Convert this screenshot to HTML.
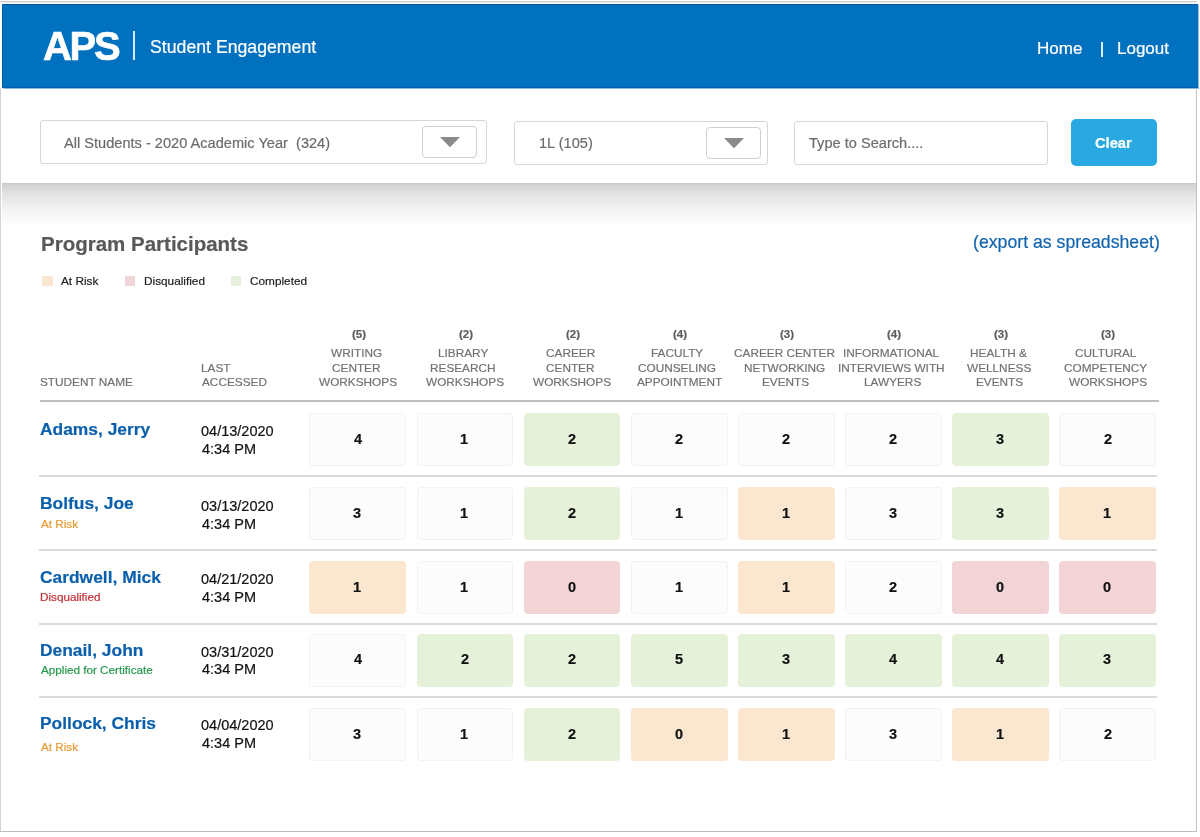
<!DOCTYPE html>
<html><head><meta charset="utf-8"><title>APS Student Engagement</title>
<style>
html,body{margin:0;padding:0;background:#fff;width:1200px;height:837px;overflow:hidden}
body{position:relative;font-family:"Liberation Sans",sans-serif}
.t{position:absolute;white-space:pre;will-change:transform;-webkit-text-stroke:0.2px currentColor}
.r{position:absolute}
</style></head><body>
<div class="r" style="left:0.00px;top:1.00px;width:1197.00px;height:1.00px;background:#cfcfcf"></div>
<div class="r" style="left:0.00px;top:2.00px;width:1197.00px;height:1.00px;background:#e4ebf2"></div>
<div class="r" style="left:0.00px;top:88.00px;width:1.00px;height:744.00px;background:#d4d4d4"></div>
<div class="r" style="left:1196.00px;top:88.00px;width:1.00px;height:744.00px;background:#c4c4c4"></div>
<div class="r" style="left:0.00px;top:831.00px;width:1197.00px;height:1.00px;background:#bdbdbd"></div>
<div class="r" style="left:2.00px;top:4.00px;width:1195.50px;height:84.00px;background:#0071bf;box-shadow:inset 0 -1px 0 #005fa8, inset 1px 0 0 #0060a8, inset 0 1px 0 #0058a0, 0 0 1px 0.5px #8dbbe0"></div>
<div class="t" style="left:42.50px;top:26px;font-size:40px;line-height:40px;color:#fff;font-weight:bold;letter-spacing:-2.3px;-webkit-text-stroke:0.6px #fff;">APS</div>
<div class="r" style="left:133.20px;top:31.40px;width:2.00px;height:28.60px;background:#d4ecff"></div>
<div class="t" style="left:150.00px;top:39px;font-size:17.7px;line-height:17.7px;color:#fff;font-weight:normal;letter-spacing:0px;">Student Engagement</div>
<div class="t" style="left:1036.70px;top:40px;font-size:17px;line-height:17px;color:#fff;font-weight:normal;letter-spacing:0px;">Home</div>
<div class="r" style="left:1101.00px;top:41.80px;width:1.60px;height:15.40px;background:#d8efff"></div>
<div class="t" style="left:1117.00px;top:40px;font-size:17px;line-height:17px;color:#fff;font-weight:normal;letter-spacing:0px;">Logout</div>
<div class="r" style="left:40.30px;top:120.00px;width:446.90px;height:44.00px;border:1.3px solid #d6d6d6;border-radius:3px;box-sizing:border-box;background:#fff"></div>
<div class="r" style="left:422.20px;top:125.70px;width:55.30px;height:32.50px;border:1.3px solid #cfcfcf;border-radius:4px;box-sizing:border-box;background:#fff"></div>
<svg class="r" style="left:440px;top:137px" width="20" height="11" viewBox="0 0 20 11"><path d="M0 0H20L10 10.3Z" fill="#8a8a8a"/></svg>
<div class="t" style="left:64.40px;top:136px;font-size:14.6px;line-height:14.6px;color:#6c6c6c;font-weight:normal;letter-spacing:0px;">All Students - 2020 Academic Year  (324)</div>
<div class="r" style="left:514.25px;top:120.50px;width:254.00px;height:44.00px;border:1.3px solid #d6d6d6;border-radius:3px;box-sizing:border-box;background:#fff"></div>
<div class="r" style="left:705.50px;top:126.75px;width:55.00px;height:32.50px;border:1.3px solid #cfcfcf;border-radius:4px;box-sizing:border-box;background:#fff"></div>
<svg class="r" style="left:724px;top:137.5px" width="20" height="11" viewBox="0 0 20 11"><path d="M0 0H20L10 10.3Z" fill="#8a8a8a"/></svg>
<div class="t" style="left:538.50px;top:136px;font-size:14.6px;line-height:14.6px;color:#6c6c6c;font-weight:normal;letter-spacing:0px;">1L (105)</div>
<div class="r" style="left:793.75px;top:120.70px;width:254.65px;height:44.30px;border:1.3px solid #d6d6d6;border-radius:3px;box-sizing:border-box;background:#fff"></div>
<div class="t" style="left:809.00px;top:136px;font-size:14.6px;line-height:14.6px;color:#6c6c6c;font-weight:normal;letter-spacing:0px;">Type to Search....</div>
<div class="r" style="left:1070.90px;top:119.00px;width:86.40px;height:46.70px;background:#2aa8e1;border-radius:5px"></div>
<div class="t" style="left:1094.80px;top:136px;font-size:14.7px;line-height:14.7px;color:#fff;font-weight:bold;letter-spacing:0px;">Clear</div>
<div class="r" style="left:2.00px;top:183.00px;width:1193.50px;height:43.00px;background:linear-gradient(#c9c9c9 0px,#d6d6d6 3px,#e4e4e4 12px,#f3f3f3 26px,#fff 43px)"></div>
<div class="t" style="left:41.00px;top:234px;font-size:20.5px;line-height:20.5px;color:#595959;font-weight:bold;letter-spacing:0px;">Program Participants</div>
<div class="t" style="left:972.80px;top:234px;font-size:17.7px;line-height:17.7px;color:#1164ae;font-weight:normal;letter-spacing:0px;">(export as spreadsheet)</div>
<div class="r" style="left:42.00px;top:276.00px;width:10.50px;height:10.00px;background:#fbe6d1"></div>
<div class="t" style="left:61.25px;top:276px;font-size:11.8px;line-height:11.8px;color:#222;font-weight:normal;letter-spacing:0px;">At Risk</div>
<div class="r" style="left:125.00px;top:276.00px;width:10.00px;height:10.00px;background:#f1d6d9"></div>
<div class="t" style="left:144.00px;top:276px;font-size:11.8px;line-height:11.8px;color:#222;font-weight:normal;letter-spacing:0px;">Disqualified</div>
<div class="r" style="left:231.00px;top:276.00px;width:10.00px;height:10.00px;background:#e6f0da"></div>
<div class="t" style="left:250.20px;top:276px;font-size:11.8px;line-height:11.8px;color:#222;font-weight:normal;letter-spacing:0px;">Completed</div>
<div class="t" style="left:40.00px;top:377px;font-size:11.8px;line-height:11.8px;color:#727272;font-weight:normal;letter-spacing:0px;">STUDENT NAME</div>
<div class="t" style="left:200.70px;top:363px;font-size:11.8px;line-height:11.8px;color:#727272;font-weight:normal;letter-spacing:0px;">LAST</div>
<div class="t" style="left:201.70px;top:377px;font-size:11.8px;line-height:11.8px;color:#727272;font-weight:normal;letter-spacing:0px;">ACCESSED</div>
<div class="t" style="left:351.70px;top:329px;font-size:11.5px;line-height:11.5px;color:#5e5e5e;font-weight:bold;letter-spacing:0px;">(5)</div>
<div class="t" style="left:331.10px;top:348px;font-size:11.8px;line-height:11.8px;color:#727272;font-weight:normal;letter-spacing:0px;">WRITING</div>
<div class="t" style="left:331.60px;top:363px;font-size:11.8px;line-height:11.8px;color:#727272;font-weight:normal;letter-spacing:0px;">CENTER</div>
<div class="t" style="left:318.80px;top:377px;font-size:11.8px;line-height:11.8px;color:#727272;font-weight:normal;letter-spacing:0px;">WORKSHOPS</div>
<div class="t" style="left:458.81px;top:329px;font-size:11.5px;line-height:11.5px;color:#5e5e5e;font-weight:bold;letter-spacing:0px;">(2)</div>
<div class="t" style="left:437.71px;top:348px;font-size:11.8px;line-height:11.8px;color:#727272;font-weight:normal;letter-spacing:0px;">LIBRARY</div>
<div class="t" style="left:430.21px;top:363px;font-size:11.8px;line-height:11.8px;color:#727272;font-weight:normal;letter-spacing:0px;">RESEARCH</div>
<div class="t" style="left:425.91px;top:377px;font-size:11.8px;line-height:11.8px;color:#727272;font-weight:normal;letter-spacing:0px;">WORKSHOPS</div>
<div class="t" style="left:565.92px;top:329px;font-size:11.5px;line-height:11.5px;color:#5e5e5e;font-weight:bold;letter-spacing:0px;">(2)</div>
<div class="t" style="left:545.82px;top:348px;font-size:11.8px;line-height:11.8px;color:#727272;font-weight:normal;letter-spacing:0px;">CAREER</div>
<div class="t" style="left:545.82px;top:363px;font-size:11.8px;line-height:11.8px;color:#727272;font-weight:normal;letter-spacing:0px;">CENTER</div>
<div class="t" style="left:533.02px;top:377px;font-size:11.8px;line-height:11.8px;color:#727272;font-weight:normal;letter-spacing:0px;">WORKSHOPS</div>
<div class="t" style="left:673.03px;top:329px;font-size:11.5px;line-height:11.5px;color:#5e5e5e;font-weight:bold;letter-spacing:0px;">(4)</div>
<div class="t" style="left:650.93px;top:348px;font-size:11.8px;line-height:11.8px;color:#727272;font-weight:normal;letter-spacing:0px;">FACULTY</div>
<div class="t" style="left:638.43px;top:363px;font-size:11.8px;line-height:11.8px;color:#727272;font-weight:normal;letter-spacing:0px;">COUNSELING</div>
<div class="t" style="left:636.63px;top:377px;font-size:11.8px;line-height:11.8px;color:#727272;font-weight:normal;letter-spacing:0px;">APPOINTMENT</div>
<div class="t" style="left:780.14px;top:329px;font-size:11.5px;line-height:11.5px;color:#5e5e5e;font-weight:bold;letter-spacing:0px;">(3)</div>
<div class="t" style="left:734.04px;top:348px;font-size:11.8px;line-height:11.8px;color:#727272;font-weight:normal;letter-spacing:0px;">CAREER CENTER</div>
<div class="t" style="left:744.04px;top:363px;font-size:11.8px;line-height:11.8px;color:#727272;font-weight:normal;letter-spacing:0px;">NETWORKING</div>
<div class="t" style="left:762.24px;top:377px;font-size:11.8px;line-height:11.8px;color:#727272;font-weight:normal;letter-spacing:0px;">EVENTS</div>
<div class="t" style="left:887.25px;top:329px;font-size:11.5px;line-height:11.5px;color:#5e5e5e;font-weight:bold;letter-spacing:0px;">(4)</div>
<div class="t" style="left:843.15px;top:348px;font-size:11.8px;line-height:11.8px;color:#727272;font-weight:normal;letter-spacing:0px;">INFORMATIONAL</div>
<div class="t" style="left:838.15px;top:363px;font-size:11.8px;line-height:11.8px;color:#727272;font-weight:normal;letter-spacing:0px;">INTERVIEWS WITH</div>
<div class="t" style="left:864.35px;top:377px;font-size:11.8px;line-height:11.8px;color:#727272;font-weight:normal;letter-spacing:0px;">LAWYERS</div>
<div class="t" style="left:994.36px;top:329px;font-size:11.5px;line-height:11.5px;color:#5e5e5e;font-weight:bold;letter-spacing:0px;">(3)</div>
<div class="t" style="left:969.76px;top:348px;font-size:11.8px;line-height:11.8px;color:#727272;font-weight:normal;letter-spacing:0px;">HEALTH &amp;</div>
<div class="t" style="left:966.76px;top:363px;font-size:11.8px;line-height:11.8px;color:#727272;font-weight:normal;letter-spacing:0px;">WELLNESS</div>
<div class="t" style="left:976.46px;top:377px;font-size:11.8px;line-height:11.8px;color:#727272;font-weight:normal;letter-spacing:0px;">EVENTS</div>
<div class="t" style="left:1101.47px;top:329px;font-size:11.5px;line-height:11.5px;color:#5e5e5e;font-weight:bold;letter-spacing:0px;">(3)</div>
<div class="t" style="left:1074.87px;top:348px;font-size:11.8px;line-height:11.8px;color:#727272;font-weight:normal;letter-spacing:0px;">CULTURAL</div>
<div class="t" style="left:1063.87px;top:363px;font-size:11.8px;line-height:11.8px;color:#727272;font-weight:normal;letter-spacing:0px;">COMPETENCY</div>
<div class="t" style="left:1068.57px;top:377px;font-size:11.8px;line-height:11.8px;color:#727272;font-weight:normal;letter-spacing:0px;">WORKSHOPS</div>
<div class="r" style="left:40.00px;top:400.00px;width:1118.75px;height:2.00px;background:#bfbfbf"></div>
<div class="t" style="left:40.20px;top:421px;font-size:17.4px;line-height:17.4px;color:#0b5fab;font-weight:bold;letter-spacing:0px;">Adams, Jerry</div>
<div class="t" style="left:200.60px;top:424px;font-size:14.5px;line-height:14.5px;color:#111;font-weight:normal;letter-spacing:0px;">04/13/2020</div>
<div class="t" style="left:201.50px;top:442px;font-size:14.5px;line-height:14.5px;color:#111;font-weight:normal;letter-spacing:0px;">4:34 PM</div>
<div class="r" style="left:309.40px;top:413.00px;width:96.80px;height:53.00px;background:#fcfcfc;box-shadow:inset 0 0 0 1px #f3f3f3;border-radius:4px"></div>
<div class="t" style="left:353.80px;top:432px;font-size:14.5px;line-height:14.5px;color:#111;font-weight:bold;letter-spacing:0px;">4</div>
<div class="r" style="left:416.51px;top:413.00px;width:96.80px;height:53.00px;background:#fcfcfc;box-shadow:inset 0 0 0 1px #f3f3f3;border-radius:4px"></div>
<div class="t" style="left:460.41px;top:432px;font-size:14.5px;line-height:14.5px;color:#111;font-weight:bold;letter-spacing:0px;">1</div>
<div class="r" style="left:523.62px;top:413.00px;width:96.80px;height:53.00px;background:#e6f1d9;border-radius:4px"></div>
<div class="t" style="left:568.02px;top:432px;font-size:14.5px;line-height:14.5px;color:#111;font-weight:bold;letter-spacing:0px;">2</div>
<div class="r" style="left:630.73px;top:413.00px;width:96.80px;height:53.00px;background:#fcfcfc;box-shadow:inset 0 0 0 1px #f3f3f3;border-radius:4px"></div>
<div class="t" style="left:675.13px;top:432px;font-size:14.5px;line-height:14.5px;color:#111;font-weight:bold;letter-spacing:0px;">2</div>
<div class="r" style="left:737.84px;top:413.00px;width:96.80px;height:53.00px;background:#fcfcfc;box-shadow:inset 0 0 0 1px #f3f3f3;border-radius:4px"></div>
<div class="t" style="left:782.24px;top:432px;font-size:14.5px;line-height:14.5px;color:#111;font-weight:bold;letter-spacing:0px;">2</div>
<div class="r" style="left:844.95px;top:413.00px;width:96.80px;height:53.00px;background:#fcfcfc;box-shadow:inset 0 0 0 1px #f3f3f3;border-radius:4px"></div>
<div class="t" style="left:889.35px;top:432px;font-size:14.5px;line-height:14.5px;color:#111;font-weight:bold;letter-spacing:0px;">2</div>
<div class="r" style="left:952.06px;top:413.00px;width:96.80px;height:53.00px;background:#e6f1d9;border-radius:4px"></div>
<div class="t" style="left:995.96px;top:432px;font-size:14.5px;line-height:14.5px;color:#111;font-weight:bold;letter-spacing:0px;">3</div>
<div class="r" style="left:1059.17px;top:413.00px;width:96.80px;height:53.00px;background:#fcfcfc;box-shadow:inset 0 0 0 1px #f3f3f3;border-radius:4px"></div>
<div class="t" style="left:1103.57px;top:432px;font-size:14.5px;line-height:14.5px;color:#111;font-weight:bold;letter-spacing:0px;">2</div>
<div class="t" style="left:40.20px;top:495px;font-size:17.4px;line-height:17.4px;color:#0b5fab;font-weight:bold;letter-spacing:0px;">Bolfus, Joe</div>
<div class="t" style="left:40.50px;top:518px;font-size:11.7px;line-height:11.7px;color:#e69b34;font-weight:normal;letter-spacing:0px;">At Risk</div>
<div class="t" style="left:200.60px;top:499px;font-size:14.5px;line-height:14.5px;color:#111;font-weight:normal;letter-spacing:0px;">03/13/2020</div>
<div class="t" style="left:201.50px;top:517px;font-size:14.5px;line-height:14.5px;color:#111;font-weight:normal;letter-spacing:0px;">4:34 PM</div>
<div class="r" style="left:309.40px;top:487.00px;width:96.80px;height:53.00px;background:#fcfcfc;box-shadow:inset 0 0 0 1px #f3f3f3;border-radius:4px"></div>
<div class="t" style="left:353.30px;top:506px;font-size:14.5px;line-height:14.5px;color:#111;font-weight:bold;letter-spacing:0px;">3</div>
<div class="r" style="left:416.51px;top:487.00px;width:96.80px;height:53.00px;background:#fcfcfc;box-shadow:inset 0 0 0 1px #f3f3f3;border-radius:4px"></div>
<div class="t" style="left:460.41px;top:506px;font-size:14.5px;line-height:14.5px;color:#111;font-weight:bold;letter-spacing:0px;">1</div>
<div class="r" style="left:523.62px;top:487.00px;width:96.80px;height:53.00px;background:#e6f1d9;border-radius:4px"></div>
<div class="t" style="left:568.02px;top:506px;font-size:14.5px;line-height:14.5px;color:#111;font-weight:bold;letter-spacing:0px;">2</div>
<div class="r" style="left:630.73px;top:487.00px;width:96.80px;height:53.00px;background:#fcfcfc;box-shadow:inset 0 0 0 1px #f3f3f3;border-radius:4px"></div>
<div class="t" style="left:674.63px;top:506px;font-size:14.5px;line-height:14.5px;color:#111;font-weight:bold;letter-spacing:0px;">1</div>
<div class="r" style="left:737.84px;top:487.00px;width:96.80px;height:53.00px;background:#fbe6d0;border-radius:4px"></div>
<div class="t" style="left:781.74px;top:506px;font-size:14.5px;line-height:14.5px;color:#111;font-weight:bold;letter-spacing:0px;">1</div>
<div class="r" style="left:844.95px;top:487.00px;width:96.80px;height:53.00px;background:#fcfcfc;box-shadow:inset 0 0 0 1px #f3f3f3;border-radius:4px"></div>
<div class="t" style="left:888.85px;top:506px;font-size:14.5px;line-height:14.5px;color:#111;font-weight:bold;letter-spacing:0px;">3</div>
<div class="r" style="left:952.06px;top:487.00px;width:96.80px;height:53.00px;background:#e6f1d9;border-radius:4px"></div>
<div class="t" style="left:995.96px;top:506px;font-size:14.5px;line-height:14.5px;color:#111;font-weight:bold;letter-spacing:0px;">3</div>
<div class="r" style="left:1059.17px;top:487.00px;width:96.80px;height:53.00px;background:#fbe6d0;border-radius:4px"></div>
<div class="t" style="left:1103.07px;top:506px;font-size:14.5px;line-height:14.5px;color:#111;font-weight:bold;letter-spacing:0px;">1</div>
<div class="t" style="left:40.20px;top:569px;font-size:17.4px;line-height:17.4px;color:#0b5fab;font-weight:bold;letter-spacing:0px;">Cardwell, Mick</div>
<div class="t" style="left:39.50px;top:591px;font-size:11.7px;line-height:11.7px;color:#bf2f36;font-weight:normal;letter-spacing:0px;">Disqualified</div>
<div class="t" style="left:200.60px;top:572px;font-size:14.5px;line-height:14.5px;color:#111;font-weight:normal;letter-spacing:0px;">04/21/2020</div>
<div class="t" style="left:201.50px;top:590px;font-size:14.5px;line-height:14.5px;color:#111;font-weight:normal;letter-spacing:0px;">4:34 PM</div>
<div class="r" style="left:309.40px;top:560.50px;width:96.80px;height:53.00px;background:#fbe6d0;border-radius:4px"></div>
<div class="t" style="left:353.30px;top:580px;font-size:14.5px;line-height:14.5px;color:#111;font-weight:bold;letter-spacing:0px;">1</div>
<div class="r" style="left:416.51px;top:560.50px;width:96.80px;height:53.00px;background:#fcfcfc;box-shadow:inset 0 0 0 1px #f3f3f3;border-radius:4px"></div>
<div class="t" style="left:460.41px;top:580px;font-size:14.5px;line-height:14.5px;color:#111;font-weight:bold;letter-spacing:0px;">1</div>
<div class="r" style="left:523.62px;top:560.50px;width:96.80px;height:53.00px;background:#f2d4d7;border-radius:4px"></div>
<div class="t" style="left:567.52px;top:580px;font-size:14.5px;line-height:14.5px;color:#111;font-weight:bold;letter-spacing:0px;">0</div>
<div class="r" style="left:630.73px;top:560.50px;width:96.80px;height:53.00px;background:#fcfcfc;box-shadow:inset 0 0 0 1px #f3f3f3;border-radius:4px"></div>
<div class="t" style="left:674.63px;top:580px;font-size:14.5px;line-height:14.5px;color:#111;font-weight:bold;letter-spacing:0px;">1</div>
<div class="r" style="left:737.84px;top:560.50px;width:96.80px;height:53.00px;background:#fbe6d0;border-radius:4px"></div>
<div class="t" style="left:781.74px;top:580px;font-size:14.5px;line-height:14.5px;color:#111;font-weight:bold;letter-spacing:0px;">1</div>
<div class="r" style="left:844.95px;top:560.50px;width:96.80px;height:53.00px;background:#fcfcfc;box-shadow:inset 0 0 0 1px #f3f3f3;border-radius:4px"></div>
<div class="t" style="left:889.35px;top:580px;font-size:14.5px;line-height:14.5px;color:#111;font-weight:bold;letter-spacing:0px;">2</div>
<div class="r" style="left:952.06px;top:560.50px;width:96.80px;height:53.00px;background:#f2d4d7;border-radius:4px"></div>
<div class="t" style="left:995.96px;top:580px;font-size:14.5px;line-height:14.5px;color:#111;font-weight:bold;letter-spacing:0px;">0</div>
<div class="r" style="left:1059.17px;top:560.50px;width:96.80px;height:53.00px;background:#f2d4d7;border-radius:4px"></div>
<div class="t" style="left:1103.07px;top:580px;font-size:14.5px;line-height:14.5px;color:#111;font-weight:bold;letter-spacing:0px;">0</div>
<div class="t" style="left:40.20px;top:642px;font-size:17.4px;line-height:17.4px;color:#0b5fab;font-weight:bold;letter-spacing:0px;">Denail, John</div>
<div class="t" style="left:40.50px;top:664px;font-size:11.7px;line-height:11.7px;color:#23984a;font-weight:normal;letter-spacing:0px;">Applied for Certificate</div>
<div class="t" style="left:200.60px;top:645px;font-size:14.5px;line-height:14.5px;color:#111;font-weight:normal;letter-spacing:0px;">03/31/2020</div>
<div class="t" style="left:201.50px;top:662px;font-size:14.5px;line-height:14.5px;color:#111;font-weight:normal;letter-spacing:0px;">4:34 PM</div>
<div class="r" style="left:309.40px;top:633.50px;width:96.80px;height:53.00px;background:#fcfcfc;box-shadow:inset 0 0 0 1px #f3f3f3;border-radius:4px"></div>
<div class="t" style="left:353.80px;top:652px;font-size:14.5px;line-height:14.5px;color:#111;font-weight:bold;letter-spacing:0px;">4</div>
<div class="r" style="left:416.51px;top:633.50px;width:96.80px;height:53.00px;background:#e6f1d9;border-radius:4px"></div>
<div class="t" style="left:460.91px;top:652px;font-size:14.5px;line-height:14.5px;color:#111;font-weight:bold;letter-spacing:0px;">2</div>
<div class="r" style="left:523.62px;top:633.50px;width:96.80px;height:53.00px;background:#e6f1d9;border-radius:4px"></div>
<div class="t" style="left:568.02px;top:652px;font-size:14.5px;line-height:14.5px;color:#111;font-weight:bold;letter-spacing:0px;">2</div>
<div class="r" style="left:630.73px;top:633.50px;width:96.80px;height:53.00px;background:#e6f1d9;border-radius:4px"></div>
<div class="t" style="left:674.63px;top:652px;font-size:14.5px;line-height:14.5px;color:#111;font-weight:bold;letter-spacing:0px;">5</div>
<div class="r" style="left:737.84px;top:633.50px;width:96.80px;height:53.00px;background:#e6f1d9;border-radius:4px"></div>
<div class="t" style="left:781.74px;top:652px;font-size:14.5px;line-height:14.5px;color:#111;font-weight:bold;letter-spacing:0px;">3</div>
<div class="r" style="left:844.95px;top:633.50px;width:96.80px;height:53.00px;background:#e6f1d9;border-radius:4px"></div>
<div class="t" style="left:889.35px;top:652px;font-size:14.5px;line-height:14.5px;color:#111;font-weight:bold;letter-spacing:0px;">4</div>
<div class="r" style="left:952.06px;top:633.50px;width:96.80px;height:53.00px;background:#e6f1d9;border-radius:4px"></div>
<div class="t" style="left:996.46px;top:652px;font-size:14.5px;line-height:14.5px;color:#111;font-weight:bold;letter-spacing:0px;">4</div>
<div class="r" style="left:1059.17px;top:633.50px;width:96.80px;height:53.00px;background:#e6f1d9;border-radius:4px"></div>
<div class="t" style="left:1103.07px;top:652px;font-size:14.5px;line-height:14.5px;color:#111;font-weight:bold;letter-spacing:0px;">3</div>
<div class="t" style="left:40.20px;top:715px;font-size:17.4px;line-height:17.4px;color:#0b5fab;font-weight:bold;letter-spacing:0px;">Pollock, Chris</div>
<div class="t" style="left:40.50px;top:741px;font-size:11.7px;line-height:11.7px;color:#e69b34;font-weight:normal;letter-spacing:0px;">At Risk</div>
<div class="t" style="left:200.60px;top:718px;font-size:14.5px;line-height:14.5px;color:#111;font-weight:normal;letter-spacing:0px;">04/04/2020</div>
<div class="t" style="left:201.50px;top:736px;font-size:14.5px;line-height:14.5px;color:#111;font-weight:normal;letter-spacing:0px;">4:34 PM</div>
<div class="r" style="left:309.40px;top:708.00px;width:96.80px;height:53.00px;background:#fcfcfc;box-shadow:inset 0 0 0 1px #f3f3f3;border-radius:4px"></div>
<div class="t" style="left:353.30px;top:727px;font-size:14.5px;line-height:14.5px;color:#111;font-weight:bold;letter-spacing:0px;">3</div>
<div class="r" style="left:416.51px;top:708.00px;width:96.80px;height:53.00px;background:#fcfcfc;box-shadow:inset 0 0 0 1px #f3f3f3;border-radius:4px"></div>
<div class="t" style="left:460.41px;top:727px;font-size:14.5px;line-height:14.5px;color:#111;font-weight:bold;letter-spacing:0px;">1</div>
<div class="r" style="left:523.62px;top:708.00px;width:96.80px;height:53.00px;background:#e6f1d9;border-radius:4px"></div>
<div class="t" style="left:568.02px;top:727px;font-size:14.5px;line-height:14.5px;color:#111;font-weight:bold;letter-spacing:0px;">2</div>
<div class="r" style="left:630.73px;top:708.00px;width:96.80px;height:53.00px;background:#fbe6d0;border-radius:4px"></div>
<div class="t" style="left:674.63px;top:727px;font-size:14.5px;line-height:14.5px;color:#111;font-weight:bold;letter-spacing:0px;">0</div>
<div class="r" style="left:737.84px;top:708.00px;width:96.80px;height:53.00px;background:#fbe6d0;border-radius:4px"></div>
<div class="t" style="left:781.74px;top:727px;font-size:14.5px;line-height:14.5px;color:#111;font-weight:bold;letter-spacing:0px;">1</div>
<div class="r" style="left:844.95px;top:708.00px;width:96.80px;height:53.00px;background:#fcfcfc;box-shadow:inset 0 0 0 1px #f3f3f3;border-radius:4px"></div>
<div class="t" style="left:888.85px;top:727px;font-size:14.5px;line-height:14.5px;color:#111;font-weight:bold;letter-spacing:0px;">3</div>
<div class="r" style="left:952.06px;top:708.00px;width:96.80px;height:53.00px;background:#fbe6d0;border-radius:4px"></div>
<div class="t" style="left:995.96px;top:727px;font-size:14.5px;line-height:14.5px;color:#111;font-weight:bold;letter-spacing:0px;">1</div>
<div class="r" style="left:1059.17px;top:708.00px;width:96.80px;height:53.00px;background:#fcfcfc;box-shadow:inset 0 0 0 1px #f3f3f3;border-radius:4px"></div>
<div class="t" style="left:1103.57px;top:727px;font-size:14.5px;line-height:14.5px;color:#111;font-weight:bold;letter-spacing:0px;">2</div>
<div class="r" style="left:38.50px;top:475.00px;width:1118.00px;height:2.00px;background:#d9d9d9"></div>
<div class="r" style="left:38.50px;top:549.20px;width:1118.00px;height:2.00px;background:#d9d9d9"></div>
<div class="r" style="left:38.50px;top:623.00px;width:1118.00px;height:2.00px;background:#d9d9d9"></div>
<div class="r" style="left:38.50px;top:696.00px;width:1118.00px;height:2.00px;background:#d9d9d9"></div>
</body></html>
